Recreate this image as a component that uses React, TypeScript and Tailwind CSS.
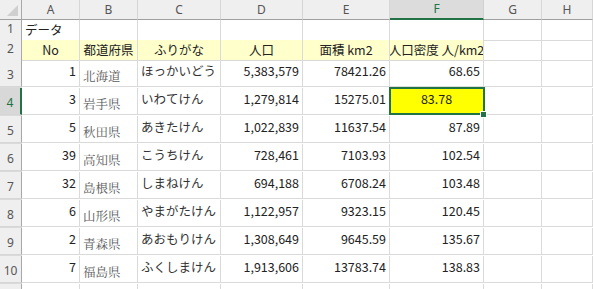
import React from "react";

const rows = [
  { no: 1, pref: "北海道", kana: "ほっかいどう", pop: "5,383,579", area: "78421.26", dens: "68.65" },
  { no: 3, pref: "岩手県", kana: "いわてけん", pop: "1,279,814", area: "15275.01", dens: "83.78" },
  { no: 5, pref: "秋田県", kana: "あきたけん", pop: "1,022,839", area: "11637.54", dens: "87.89" },
  { no: 39, pref: "高知県", kana: "こうちけん", pop: "728,461", area: "7103.93", dens: "102.54" },
  { no: 32, pref: "島根県", kana: "しまねけん", pop: "694,188", area: "6708.24", dens: "103.48" },
  { no: 6, pref: "山形県", kana: "やまがたけん", pop: "1,122,957", area: "9323.15", dens: "120.45" },
  { no: 2, pref: "青森県", kana: "あおもりけん", pop: "1,308,649", area: "9645.59", dens: "135.67" },
  { no: 7, pref: "福島県", kana: "ふくしまけん", pop: "1,913,606", area: "13783.74", dens: "138.83" },
];

const grid = "grid grid-cols-[22px_58px_58px_83px_82px_87px_94px_58px_1fr]";
const cell = "border-r border-b border-[#dadada] flex items-center overflow-hidden whitespace-nowrap";
const rowHead =
  "bg-[#efefef] border-r border-r-[#a8a8a8] border-b border-b-[#d6d6d6] flex items-end justify-center pb-[2px] text-[12px] text-[#555] font-['Noto_Sans',sans-serif]";

function RowHeader({ n, active }: { n?: number; active?: boolean }) {
  return (
    <div
      className={
        active
          ? "bg-[#d8d8d8] border-r-2 border-r-[#217346] border-b border-b-[#d6d6d6] flex items-end justify-center pb-[2px] text-[12px] text-[#217346] font-['Noto_Sans',sans-serif]"
          : rowHead
      }
    >
      {n}
    </div>
  );
}

export default function App() {
  return (
    <div className="w-[593px] h-[289px] overflow-hidden bg-white text-[12.5px] text-[#222] font-['Noto_Sans_CJK_JP',sans-serif]">
      {/* column letters */}
      <div className={`${grid} h-[20px]`}>
        <div className="relative bg-[#efefef] border-r border-r-[#a8a8a8] border-b border-b-[#a0a0a0]">
          <svg className="absolute right-[3px] bottom-[3px]" width="11" height="11" viewBox="0 0 11 11">
            <polygon points="11,0 11,11 0,11" fill="#cfcfcf" />
          </svg>
        </div>
        {["A", "B", "C", "D", "E", "F", "G", "H", ""].map((c) => (
          <div
            key={c || "x"}
            className={
              c === "F"
                ? "bg-[#dcdcdc] border-r border-r-[#d0d0d0] border-b-2 border-b-[#217346] flex items-center justify-center text-[12px] text-[#217346] font-['Noto_Sans',sans-serif]"
                : "bg-[#efefef] border-r border-r-[#d6d6d6] border-b border-b-[#a0a0a0] flex items-center justify-center text-[12px] text-[#555] font-['Noto_Sans',sans-serif]"
            }
          >
            {c}
          </div>
        ))}
      </div>

      {/* row 1 */}
      <div className={`${grid} h-[20px]`}>
        <RowHeader n={1} />
        <div className={`${cell} pl-[3px]`}>データ</div>
        {Array.from({ length: 7 }).map((_, i) => (
          <div key={i} className={cell} />
        ))}
      </div>

      {/* row 2 headings */}
      <div className={`${grid} h-[20px]`}>
        <RowHeader n={2} />
        {["No", "都道府県", "ふりがな", "人口", "面積 km2", "人口密度 人/km2"].map((h) => (
          <div key={h} className={`${cell} justify-center bg-[#ffffcc]`}>
            {h}
          </div>
        ))}
        {Array.from({ length: 3 }).map((_, i) => (
          <div key={i} className={cell} />
        ))}
      </div>

      {/* data rows */}
      {rows.map((r, i) => {
        const active = i === 1;
        return (
          <div key={r.pref} className={`${grid} h-[28px]`}>
            <RowHeader n={i + 3} active={active} />
            <div className={`${cell} justify-end pr-[3px] pb-[3px]`}>{r.no}</div>
            <div className={`${cell} pl-[3px] pt-[7px] text-[#5a5a5a] font-['Noto_Serif_CJK_JP','Liberation_Serif',serif]`}>
              {r.pref}
            </div>
            <div className={`${cell} pl-[3px] pb-[3px] text-[#333]`}>{r.kana}</div>
            <div className={`${cell} justify-end pr-[3px] pb-[3px]`}>{r.pop}</div>
            <div className={`${cell} justify-end pr-[3px] pb-[3px]`}>{r.area}</div>
            {active ? (
              <div className={`${cell} relative justify-center bg-[#ffff00] pb-[3px] overflow-visible`}>
                {r.dens}
                <div className="absolute -left-px -top-px -right-[2px] -bottom-px border-2 border-[#217346]" />
                <div className="absolute -right-[4px] -bottom-[4px] w-[7px] h-[7px] bg-[#217346] border border-white" />
              </div>
            ) : (
              <div className={`${cell} justify-end pr-[3px] pb-[3px]`}>{r.dens}</div>
            )}
            <div className={cell} />
            <div className={cell} />
            <div className={cell} />
          </div>
        );
      })}

      {/* row 11, only its top edge shows */}
      <div className={`${grid} h-[28px]`}>
        <RowHeader />
        {Array.from({ length: 9 }).map((_, i) => (
          <div key={i} className={cell} />
        ))}
      </div>
    </div>
  );
}
